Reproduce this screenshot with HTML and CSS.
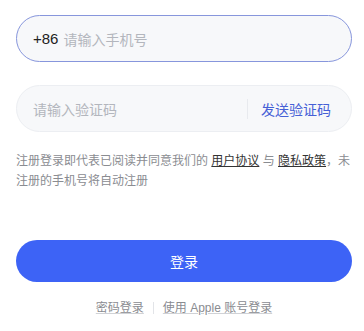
FILE: index.html
```html
<!DOCTYPE html>
<html lang="zh-CN">
<head>
<meta charset="utf-8">
<link rel="stylesheet" href="styles.css">
</head>
<body>
<div class="page">
  <div class="field field-active">
    <span class="prefix">+86</span>
    <span class="placeholder">请输入手机号</span>
  </div>
  <div class="field field-code">
    <span class="placeholder grow">请输入验证码</span>
    <span class="divider"></span>
    <span class="send">发送验证码</span>
  </div>
  <p class="terms">注册登录即代表已阅读并同意我们的 <span class="link">用户协议</span> 与 <span class="link">隐私政策</span>，未注册的手机号将自动注册</p>
  <button class="login">登录</button>
  <div class="alt">
    <span class="alt-link">密码登录</span>
    <span class="alt-sep"></span>
    <span class="alt-link">使用 Apple 账号登录</span>
  </div>
</div>
</body>
</html>
```

FILE: styles.css
```css
* { box-sizing: border-box; }
html, body { margin: 0; padding: 0; background: #fff; }
body {
  font-family: "Liberation Sans", "Noto Sans CJK SC", sans-serif;
  color: #333;
}
.page {
  padding: 15px 12px 0 16px;
  display: flex;
  flex-direction: column;
}
.field {
  height: 47px;
  border-radius: 24px;
  background: #f7f8fa;
  border: 1px solid #eceef2;
  display: flex;
  align-items: center;
  padding: 0 16px;
  font-size: 14px;
}
.field-active {
  border-color: #8796dc;
}
.field-code {
  margin-top: 23px;
  padding-right: 20px;
}
.prefix {
  color: #222;
  font-size: 15px;
  margin-right: 5px;
}
.placeholder {
  color: #b3b6bd;
}
.grow { flex: 1; }
.divider {
  width: 1px;
  height: 20px;
  background: #e8eaee;
  margin-right: 13px;
}
.send {
  color: #4660d6;
}
.terms {
  margin: 19px 0 0 0;
  font-size: 12px;
  line-height: 20px;
  color: #8a8c91;
}
.link {
  color: #333;
  text-decoration: underline;
}
.login {
  margin-top: 49px;
  height: 42px;
  border: none;
  border-radius: 21px;
  background: #3d63f6;
  color: #fff;
  font-family: inherit;
  font-size: 14px;
  padding: 0;
}
.alt {
  margin-top: 18px;
  display: flex;
  justify-content: center;
  align-items: center;
  font-size: 12px;
  line-height: 16px;
  color: #8a8c91;
}
.alt-link {
  text-decoration: underline;
  text-decoration-color: #d0d2d6;
}
.alt-sep {
  width: 1px;
  height: 12px;
  background: #e2e4e8;
  margin: 0 9px;
}
```
